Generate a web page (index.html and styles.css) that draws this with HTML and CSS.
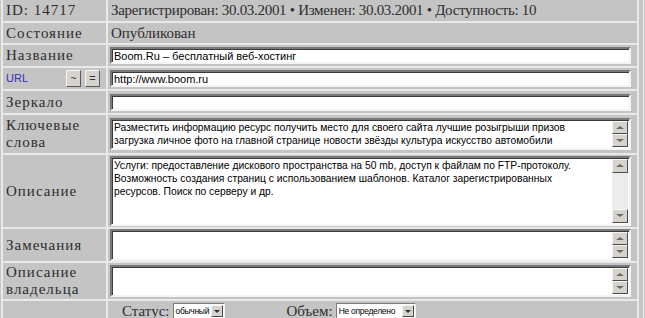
FILE: index.html
```html
<!DOCTYPE html>
<html>

<head>
    <link rel="stylesheet" href="styles.css">
</head>

<body>

    <div class="page">
        <table class="card">
            <tr class="row-id">
                <td class="lbl">ID: 14717</td>
                <td class="val info info-top">Зарегистрирован: 30.03.2001 • Изменен: 30.03.2001 • Доступность: 10</td>
            </tr>
            <tr class="row-state">
                <td class="lbl">Состояние</td>
                <td class="val info">Опубликован</td>
            </tr>
            <tr class="row-name">
                <td class="lbl">Название</td>
                <td class="val"><input class="field" type="text" value="Boom.Ru – бесплатный веб-хостинг"></td>
            </tr>
            <tr class="row-url">
                <td class="lbl">
                    <div class="url-cell">
                        <span class="url-label">URL</span>
                        <span class="url-btns">
                            <span class="mini-btn">~</span>
                            <span class="mini-btn">=</span>
                        </span>
                    </div>
                </td>
                <td class="val"><input class="field" type="text" value="http://www.boom.ru"></td>
            </tr>
            <tr class="row-mirror">
                <td class="lbl">Зеркало</td>
                <td class="val"><input class="field" type="text" value=""></td>
            </tr>
            <tr class="row-keys">
                <td class="lbl">Ключевые<br>слова</td>
                <td class="val">
                    <div class="area area-2">
                        <textarea class="area-text">Разместить информацию ресурс получить место для своего сайта лучшие розыгрыши призов
загрузка личное фото на главной странице новости звёзды культура искусство автомобили</textarea>
                        <div class="sbar">
                            <span class="sbtn up"></span>
                            <span class="track"></span>
                            <span class="sbtn down"></span>
                        </div>
                    </div>
                </td>
            </tr>
            <tr class="row-desc">
                <td class="lbl">Описание</td>
                <td class="val">
                    <div class="area area-5">
                        <textarea class="area-text">Услуги: предоставление дискового пространства на 50 mb, доступ к файлам по FTP-протоколу.
Возможность создания страниц с использованием шаблонов. Каталог зарегистрированных
ресурсов. Поиск по серверу и др.</textarea>
                        <div class="sbar">
                            <span class="sbtn up"></span>
                            <span class="track"></span>
                            <span class="sbtn down"></span>
                        </div>
                    </div>
                </td>
            </tr>
            <tr class="row-notes">
                <td class="lbl">Замечания</td>
                <td class="val">
                    <div class="area area-2">
                        <textarea class="area-text"></textarea>
                        <div class="sbar">
                            <span class="sbtn up"></span>
                            <span class="track"></span>
                            <span class="sbtn down"></span>
                        </div>
                    </div>
                </td>
            </tr>
            <tr class="row-owner">
                <td class="lbl">Описание<br>владельца</td>
                <td class="val">
                    <div class="area area-2">
                        <textarea class="area-text"></textarea>
                        <div class="sbar">
                            <span class="sbtn up"></span>
                            <span class="track"></span>
                            <span class="sbtn down"></span>
                        </div>
                    </div>
                </td>
            </tr>
            <tr class="row-status">
                <td class="lbl"></td>
                <td class="val">
                    <div class="status-bar">
                        <span class="opt">Статус:
                            <span class="sel sel-status"><span class="sel-text">обычный</span><span class="sel-btn"></span></span>
                        </span>
                        <span class="opt">Объем:
                            <span class="sel sel-size"><span class="sel-text">Не определено</span><span class="sel-btn"></span></span>
                        </span>
                    </div>
                </td>
            </tr>
        </table>
    </div>

</body>

</html>
```

FILE: styles.css
```css
body {
    margin: 0;
    background: #c6c6c6;
    overflow: hidden;
}

.page {
    width: 643px;
    height: 318px;
    border-right: 1px solid #efefef;
    overflow: hidden;
}

/* основная таблица */
.card {
    margin: -2px 0 0 1px;
    width: 638px;
    border-collapse: separate;
    border-spacing: 2px;
    background: #e9e9e9;
    table-layout: fixed;
    font-family: "Liberation Serif", serif;
    font-size: 15px;
    color: #2e2e2e;
}

.card td {
    background: #c4c4c4;
    padding: 0;
    line-height: 17px;
    vertical-align: middle;
}

.lbl {
    width: 100px;
    padding: 0 0 0 3px !important;
    letter-spacing: 1px;
}

.val {
    padding: 0 4px 0 2px !important;
}

.info {
    padding-left: 3px !important;
}

.info-top {
    letter-spacing: -0.3px;
}

.row-id td { height: 21px; }
.row-state td { height: 20px; }
.row-name td { height: 21px; }
.row-url td { height: 21px; }
.row-mirror td { height: 22px; }
.row-keys td { height: 38px; }
.row-desc td { height: 72px; }
.row-notes td { height: 32px; }
.row-owner td { height: 36px; }
.row-status td { height: 20px; }

/* поля ввода */
.field {
    display: block;
    box-sizing: border-box;
    width: 521px;
    height: 17px;
    margin: 0;
    padding: 0 2px;
    border: 2px solid;
    border-color: #7a7a7a #f4f4f4 #f4f4f4 #7a7a7a;
    box-shadow: inset 1px 1px 0 #3a3a3a;
    background: #fff;
    font-family: "Liberation Sans", Arial, sans-serif;
    font-size: 11px;
    color: #000;
    outline: none;
}

.url-cell {
    display: flex;
    align-items: center;
    justify-content: space-between;
    padding-right: 6px;
    letter-spacing: 0;
}

.url-label {
    font-family: "Liberation Sans", Arial, sans-serif;
    font-size: 11px;
    color: #3030c0;
}

.url-btns {
    display: flex;
    gap: 4px;
}

.mini-btn {
    box-sizing: border-box;
    width: 15px;
    height: 17px;
    background: #d6d3cc;
    border: 1px solid;
    border-color: #f6f6f6 #5a5a5a #5a5a5a #f6f6f6;
    font-family: "Liberation Sans", Arial, sans-serif;
    font-size: 11px;
    line-height: 14px;
    text-align: center;
    color: #333;
}

/* многострочные поля */
.area {
    display: flex;
    box-sizing: border-box;
    width: 521px;
    border: 2px solid;
    border-color: #7a7a7a #f4f4f4 #f4f4f4 #7a7a7a;
    box-shadow: inset 1px 1px 0 #3a3a3a;
    background: #fff;
}

.area-2 { height: 32px; }
.area-5 { height: 70px; }

.area-text {
    flex: 1;
    margin: 0;
    padding: 1px 2px;
    border: none;
    resize: none;
    overflow: hidden;
    white-space: pre;
    background: transparent;
    font-family: "Liberation Sans", Arial, sans-serif;
    font-size: 10.3px;
    line-height: 13px;
    color: #000;
    outline: none;
}

.sbar {
    display: flex;
    flex-direction: column;
    width: 16px;
    margin: 1px 1px 1px 0;
    background: #ececec;
}

.track {
    flex: 1;
}

.sbtn {
    position: relative;
    box-sizing: border-box;
    height: 14px;
    background: #d6d3cc;
    border: 1px solid;
    border-color: #f6f6f6 #4a4a4a #4a4a4a #f6f6f6;
}

.sbtn::before {
    content: "";
    position: absolute;
    left: 3px;
    top: 4px;
    border-left: 4px solid transparent;
    border-right: 4px solid transparent;
}

.sbtn.up::before {
    border-bottom: 3px solid #6a6a6a;
}

.sbtn.down::before {
    border-top: 3px solid #6a6a6a;
}

/* нижняя строка */
.status-bar {
    display: flex;
    align-items: center;
    gap: 62px;
    padding-left: 12px;
}

.opt {
    display: flex;
    align-items: center;
    gap: 3px;
}

.sel {
    display: flex;
    box-sizing: border-box;
    height: 16px;
    border: 1px solid;
    border-color: #7a7a7a #f4f4f4 #f4f4f4 #7a7a7a;
    background: #fff;
    padding: 1px;
}

.sel-status { width: 52px; }
.sel-size { width: 80px; }

.sel-text {
    flex: 1;
    white-space: nowrap;
    font-family: "Liberation Sans", Arial, sans-serif;
    font-size: 8.5px;
    letter-spacing: -0.3px;
    line-height: 12px;
    padding: 0 1px;
    color: #000;
}

.sel-btn {
    position: relative;
    box-sizing: border-box;
    width: 12px;
    background: #d6d3cc;
    border: 1px solid;
    border-color: #f6f6f6 #4a4a4a #4a4a4a #f6f6f6;
}

.sel-btn::before {
    content: "";
    position: absolute;
    left: 2px;
    top: 4px;
    border-left: 3px solid transparent;
    border-right: 3px solid transparent;
    border-top: 3px solid #333;
}
```
